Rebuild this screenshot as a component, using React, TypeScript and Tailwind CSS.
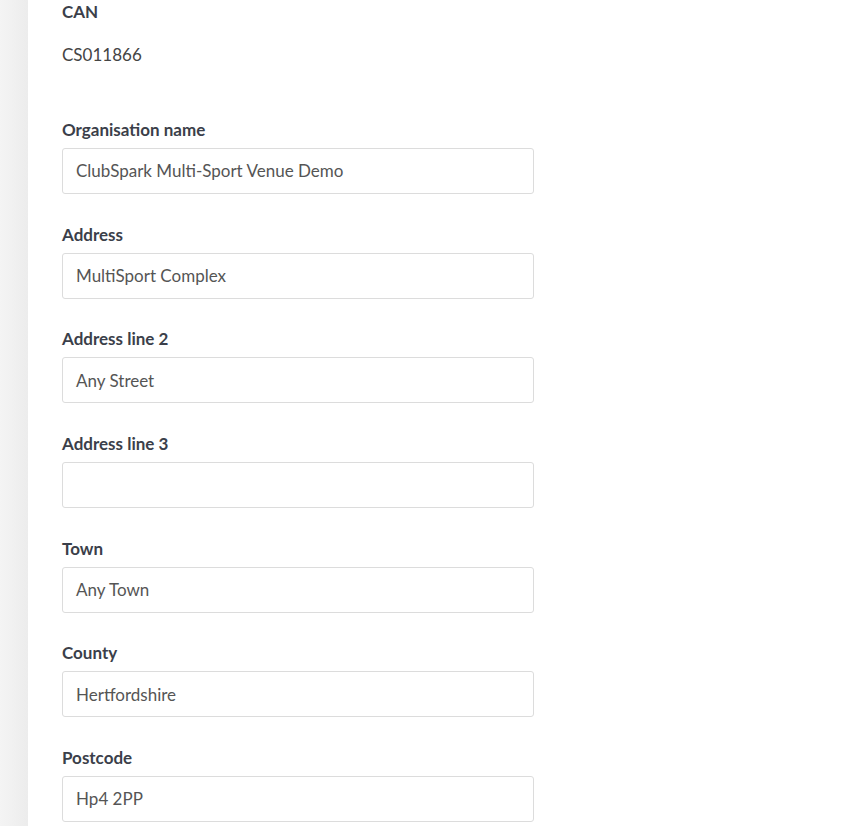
import React from "react";

const fields: { label: string; value: string }[] = [
  { label: "Organisation name", value: "ClubSpark Multi-Sport Venue Demo" },
  { label: "Address", value: "MultiSport Complex" },
  { label: "Address line 2", value: "Any Street" },
  { label: "Address line 3", value: "" },
  { label: "Town", value: "Any Town" },
  { label: "County", value: "Hertfordshire" },
  { label: "Postcode", value: "Hp4 2PP" },
];

export default function App() {
  return (
    <div
      className="flex h-[826px] w-[856px] overflow-hidden bg-white"
      style={{ fontFamily: "Lato, 'Noto Sans', sans-serif" }}
    >
      <div className="w-[28px] shrink-0 bg-linear-to-r from-[#f4f4f4] to-[#ececec]" />
      <div className="flex flex-col pl-[34px] pt-[2px]">
        <div className="text-[17px] font-bold leading-[20px] text-[#3b3f4a]">CAN</div>
        <div className="mt-[21px] text-[17px] leading-[24px] text-[#444]">CS011866</div>
        <div className="mt-[53px] flex flex-col gap-[30.67px]">
          {fields.map((f) => (
            <div key={f.label} className="flex flex-col">
              <label className="mb-[8px] text-[17px] font-bold leading-[20px] text-[#3b3f4a]">
                {f.label}
              </label>
              <div className="flex h-[46px] w-[472px] items-center rounded-[3px] border border-[#dcdcdc] bg-white px-[13px] text-[17px] text-[#555]">
                {f.value}
              </div>
            </div>
          ))}
        </div>
      </div>
    </div>
  );
}
